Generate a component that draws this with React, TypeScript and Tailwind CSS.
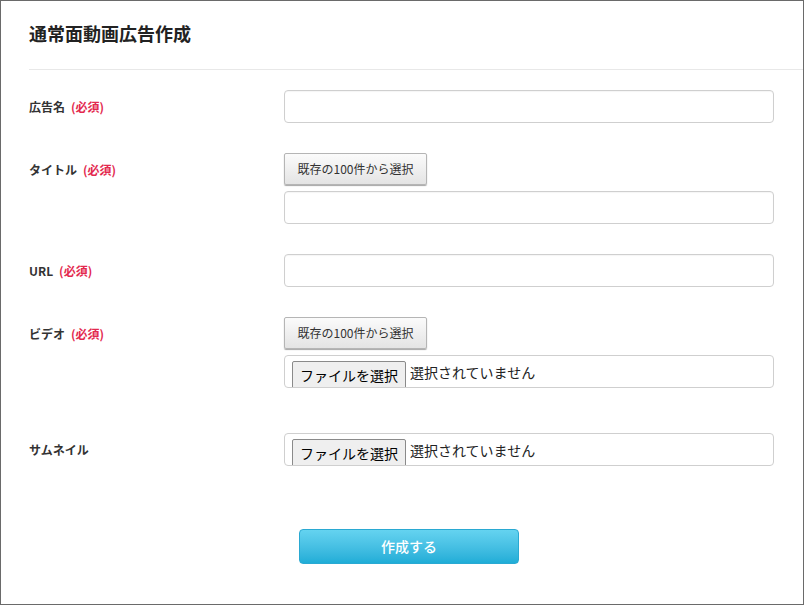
import React from "react";

const font = { fontFamily: '"Noto Sans CJK JP", "Liberation Sans", sans-serif' };

function Label({ text, required }: { text: string; required?: boolean }) {
  return (
    <div className="w-[255px] shrink-0 h-[33px] flex items-center text-[12px] font-bold text-[#333]">
      <span>{text}</span>
      {required && <span className="ml-[6px] text-[#e3294e]">(必須)</span>}
    </div>
  );
}

function TextInput() {
  return (
    <div className="w-[490px] h-[33px] rounded-[4px] border border-[#cfcfcf] bg-white shadow-[inset_0_1px_1px_rgba(0,0,0,0.04)]" />
  );
}

function PickButton() {
  return (
    <div className="w-[143px] h-[32px] flex items-center justify-center rounded-[2px] border border-[#b5b5b5] bg-gradient-to-b from-[#fbfbfb] to-[#e4e4e4] text-[12px] text-[#333] shadow-[0_1px_1px_rgba(0,0,0,0.35)]">
      既存の100件から選択
    </div>
  );
}

function FileInput() {
  return (
    <div className="w-[490px] h-[33px] rounded-[4px] border border-[#cfcfcf] bg-white overflow-hidden flex items-start pl-[7px] pt-[5px]">
      <div className="h-[28px] w-[114px] flex items-center justify-center border border-[#8a8a8a] rounded-[2px] bg-[#efefef] text-[14px] text-black">
        ファイルを選択
      </div>
      <div className="ml-[4px] h-[22px] flex items-center text-[14px] text-[#222]">選択されていません</div>
    </div>
  );
}

export default function App() {
  return (
    <div style={font} className="w-[804px] h-[605px] border border-[#6a6a6a] bg-white box-border overflow-hidden">
      <div className="ml-[28px] h-[69px] border-b border-[#e8e8e8] pt-[19px]">
        <h1 className="text-[18px] leading-[26px] font-bold text-[#222]">通常面動画広告作成</h1>
      </div>
      <div className="pl-[28px] pt-[20px]">
        <div className="flex">
          <Label text="広告名" required />
          <TextInput />
        </div>
        <div className="flex mt-[30px]">
          <Label text="タイトル" required />
          <div className="flex flex-col gap-[6px]">
            <PickButton />
            <TextInput />
          </div>
        </div>
        <div className="flex mt-[30px]">
          <Label text="URL" required />
          <TextInput />
        </div>
        <div className="flex mt-[30px]">
          <Label text="ビデオ" required />
          <div className="flex flex-col gap-[6px]">
            <PickButton />
            <FileInput />
          </div>
        </div>
        <div className="flex mt-[45px]">
          <Label text="サムネイル" />
          <FileInput />
        </div>
        <div className="mt-[63px] ml-[270px]">
          <div className="w-[220px] h-[35px] rounded-[4px] border border-[#2aa9d2] bg-gradient-to-b from-[#64d3f0] to-[#1fadd7] flex items-center justify-center text-[14px] font-medium text-white">
            作成する
          </div>
        </div>
      </div>
    </div>
  );
}
